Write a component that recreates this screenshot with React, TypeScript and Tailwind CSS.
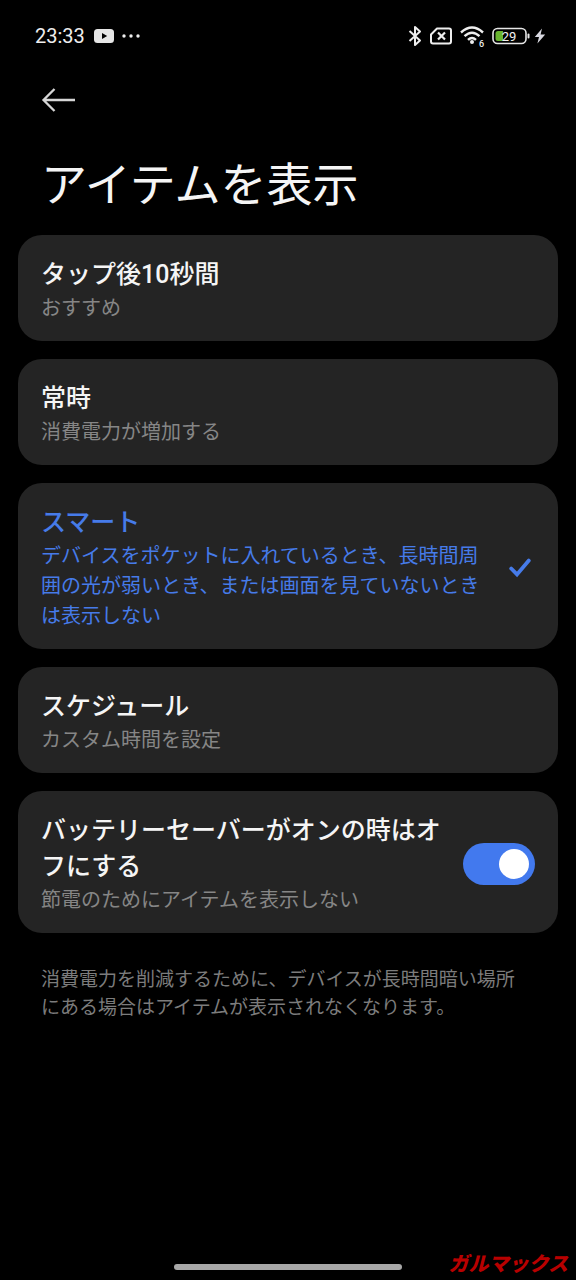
import { useState } from "react";

const options = [
  { id: "tap", title: "タップ後10秒間", text: "おすすめ" },
  { id: "always", title: "常時", text: "消費電力が増加する" },
  {
    id: "smart",
    title: "スマート",
    text: "デバイスをポケットに入れているとき、長時間周囲の光が弱いとき、または画面を見ていないときは表示しない",
  },
  { id: "schedule", title: "スケジュール", text: "カスタム時間を設定" },
];

const StatusBar = () => {
  return (
    <div className="flex h-[71px] items-center justify-between pr-[30px] pl-[35px] text-[#eeeeee]">
      <div className="flex items-center">
        <span className="text-xl">23:33</span>
        <svg className="ml-[9px]" width="20" height="16" viewBox="0 0 20 16">
          <rect x="0" y="1" width="20" height="14" rx="3.5" fill="#e6e6e6" />
          <path d="M8 5 L13.2 8 L8 11 Z" fill="#000" />
        </svg>
        <svg className="ml-2" width="18" height="4" viewBox="0 0 18 4" fill="currentColor">
          <circle cx="2" cy="2" r="1.7" />
          <circle cx="9" cy="2" r="1.7" />
          <circle cx="16" cy="2" r="1.7" />
        </svg>
      </div>

      <div className="flex items-center">
        {/* bluetooth */}
        <svg width="14" height="22" viewBox="0 0 14 22" fill="none" stroke="currentColor" strokeWidth="2">
          <path d="M1.5 6 L12 15.5 L7 20 V2 L12 6.5 L1.5 16" strokeLinejoin="round" />
        </svg>
        {/* no sim */}
        <svg className="ml-2" width="22" height="18" viewBox="0 0 22 18" fill="none" stroke="currentColor" strokeWidth="2">
          <path d="M7 1.5 H19 Q21 1.5 21 3.5 V14.5 Q21 16.5 19 16.5 H3 Q1 16.5 1 14.5 V7.5 Z" strokeLinejoin="round" />
          <path d="M8 5.5 L15 12.5 M15 5.5 L8 12.5" strokeWidth="2.2" />
        </svg>
        {/* wifi 6 */}
        <svg className="ml-2" width="28" height="24" viewBox="0 0 28 24" fill="none" stroke="currentColor" strokeWidth="2.4">
          <path d="M1 8.5 Q12 -1.5 23 8.5" />
          <path d="M4.5 12.2 Q12 5.2 19.5 12.2" />
          <path d="M8 15.8 Q12 12 16 15.8" />
          <circle cx="12" cy="18" r="2" fill="currentColor" stroke="none" />
          <text x="19" y="23" fontSize="9" fontWeight="500" fill="currentColor" stroke="none">6</text>
        </svg>
        {/* battery */}
        <svg className="ml-1" width="40" height="18" viewBox="0 0 40 18">
          <rect x="1" y="1.5" width="33" height="15" rx="4.5" fill="none" stroke="#e6e6e6" strokeWidth="1.6" />
          <path d="M6 4 H11 V14 H6 Q3.5 14 3.5 11.5 V6.5 Q3.5 4 6 4 Z" fill="#69b52f" />
          <rect x="35.5" y="6.5" width="2" height="5" rx="1" fill="#e6e6e6" />
          <text x="17" y="13.5" textAnchor="middle" fontSize="13" fill="#f2f2f2">29</text>
        </svg>
        <svg className="ml-[2px]" width="12" height="16" viewBox="0 0 12 16" fill="#d8d8e0">
          <path d="M8 0.5 L0.8 9 H5 L3.4 15.5 L11.2 6.6 H6.6 Z" />
        </svg>
      </div>
    </div>
  );
};

export default function App() {
  const [selected, setSelected] = useState("smart");
  const [saver, setSaver] = useState(true);

  return (
    <div
      lang="ja"
      className="relative flex min-h-screen flex-col bg-black font-['Roboto','Noto_Sans_CJK_JP',sans-serif] text-[#f5f5f5]"
    >
      <StatusBar />

      <header className="px-[41px]">
        <button type="button" aria-label="戻る" className="block py-4 text-[#d6d6d6]">
          <svg width="35" height="26" viewBox="0 0 35 26" fill="none" stroke="currentColor" strokeWidth="2.3">
            <path d="M34 13 H3 M13.5 2 L2.5 13 L13.5 24" />
          </svg>
        </button>
        <h1 className="mt-5 text-[46px] leading-[72px]">アイテムを表示</h1>
      </header>

      <main className="mt-[14px] flex flex-col gap-[18px] px-[18px]">
        {options.map((option) => {
          const active = selected === option.id;
          return (
            <label
              key={option.id}
              className="flex cursor-pointer items-center gap-5 rounded-3xl bg-[#242424] px-[23px] pt-[22px] pb-[18px]"
            >
              <input
                type="radio"
                name="display"
                className="sr-only"
                checked={active}
                onChange={() => setSelected(option.id)}
              />
              <span className="flex-1">
                <span className={`block text-[25px] leading-9 font-medium ${active ? "text-[#467be9]" : ""}`}>
                  {option.title}
                </span>
                <span className={`block text-xl leading-[30px] ${active ? "text-[#467be9]" : "text-[#868686]"}`}>
                  {option.text}
                </span>
              </span>
              {active && (
                <svg className="mr-1" width="22" height="20" viewBox="0 0 22 20" fill="none" stroke="#467be9" strokeWidth="3.8">
                  <path d="M2.2 10.5 L8 16.4 L19.8 2.6" strokeLinecap="round" strokeLinejoin="miter" />
                </svg>
              )}
            </label>
          );
        })}

        <label className="flex cursor-pointer items-center gap-5 rounded-3xl bg-[#242424] px-[23px] pt-[22px] pb-[18px]">
          <span className="flex-1">
            <span className="block text-[25px] leading-9 font-medium">バッテリーセーバーがオンの時はオフにする</span>
            <span className="block text-xl leading-[30px] text-[#868686]">節電のためにアイテムを表示しない</span>
          </span>
          <input
            type="checkbox"
            role="switch"
            checked={saver}
            onChange={(e) => setSaver(e.target.checked)}
            className="flex h-[42px] w-[72px] shrink-0 cursor-pointer appearance-none items-center rounded-full bg-[#4a4a4a] px-[6px] before:size-[30px] before:rounded-full before:bg-white checked:justify-end checked:bg-[#4279ee]"
          />
        </label>
      </main>

      <p className="mt-[33px] px-[41px] pr-[50px] text-[19px] leading-7 text-[#7c7c7c]">
        消費電力を削減するために、デバイスが長時間暗い場所にある場合はアイテムが表示されなくなります。
      </p>

      <div className="mx-auto mt-auto mb-[10px] h-[6px] w-[228px] rounded-full bg-[#a8a8a8]"></div>

      <span className="absolute right-2 bottom-1 text-xl leading-6 font-black text-[#b80000] italic">
        ガルマックス
      </span>
    </div>
  );
}
